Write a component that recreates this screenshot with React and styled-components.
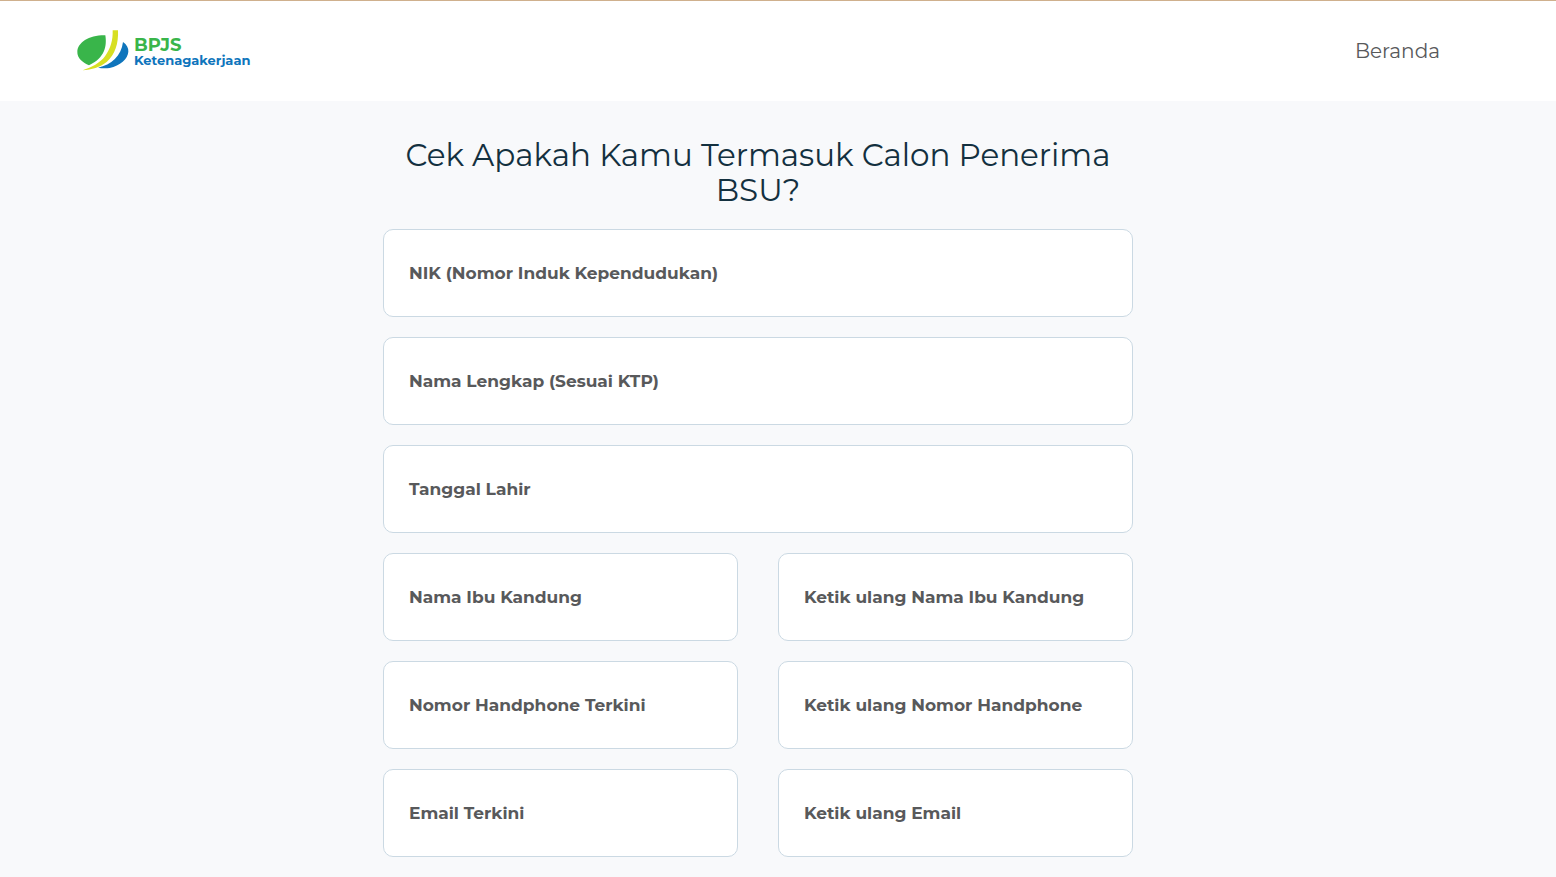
import React from "react";
import styled, { createGlobalStyle } from "styled-components";

const GlobalStyle = createGlobalStyle`
  * {
    box-sizing: border-box;
  }

  body {
    margin: 0;
    background: #f8f9fb;
    font-family: Montserrat, Inter, "Liberation Sans", sans-serif;
    color: #58595b;
  }
`;

const Header = styled.header`
  display: flex;
  align-items: center;
  justify-content: space-between;
  height: 101px;
  padding: 0 77px 1px;
  border-top: 1px solid #cfb08d;
  background: #fff;
`;

const LogoLink = styled.a`
  display: flex;
  align-items: center;
  gap: 5px;
  text-decoration: none;
`;

const LogoName = styled.span`
  display: flex;
  flex-direction: column;
  padding-top: 2px;
  font-size: 13px;
  font-weight: 700;
  line-height: 14px;
  color: #0f75bc;
`;

const LogoTop = styled.span`
  font-size: 18px;
  font-weight: 700;
  line-height: 16px;
  color: #39b54a;
`;

const NavLink = styled.a`
  padding: 10px 39px;
  font-size: 20px;
  font-weight: 400;
  line-height: 24px;
  color: #58595b;
  text-decoration: none;
`;

const Main = styled.main`
  max-width: 790px;
  margin: 0 auto;
  padding: 37px 40px 20px 0;
`;

const Title = styled.h1`
  margin: 0 0 21px;
  font-size: 31px;
  font-weight: 400;
  line-height: 35px;
  text-align: center;
  color: #13303f;
`;

const Form = styled.form`
  display: grid;
  grid-template-columns: 1fr 1fr;
  gap: 20px 40px;
`;

const FieldStyled = styled.div`
  position: relative;
  grid-column: ${({ $wide }) => ($wide ? "1 / -1" : "auto")};
`;

const Label = styled.label`
  position: absolute;
  top: 32px;
  left: 26px;
  font-size: 17px;
  font-weight: 700;
  line-height: 24px;
  white-space: nowrap;
  pointer-events: none;
`;

const Input = styled.input`
  display: block;
  width: 100%;
  height: 88px;
  padding: 24px 25px 0;
  border: 1px solid #cbd9e3;
  border-radius: 10px;
  background: #fff;
  font: inherit;
  font-size: 17px;
  color: inherit;
  outline: none;

  &:focus {
    border-color: #0f75bc;
  }

  &:focus + ${Label}, &:not(:placeholder-shown) + ${Label} {
    top: 10px;
    font-size: 13px;
  }
`;

const fields = [
  { name: "nik", label: "NIK (Nomor Induk Kependudukan)", wide: true },
  { name: "nama", label: "Nama Lengkap (Sesuai KTP)", wide: true },
  { name: "lahir", label: "Tanggal Lahir", wide: true },
  { name: "ibu", label: "Nama Ibu Kandung" },
  { name: "ibuUlang", label: "Ketik ulang Nama Ibu Kandung" },
  { name: "hp", label: "Nomor Handphone Terkini" },
  { name: "hpUlang", label: "Ketik ulang Nomor Handphone" },
  { name: "email", label: "Email Terkini" },
  { name: "emailUlang", label: "Ketik ulang Email" },
];

const LogoMark = () => (
  <svg width="52" height="41" viewBox="50 44 156 123" aria-hidden="true">
    <path
      fill="#39b54a"
      d="M86 150C68 142 50 128 51 109C52 82 86 59 135 60C140 92 134 128 86 150Z"
    />
    <path
      fill="#d7df23"
      d="M157 45H173C175 84 164 119 139 140C119 156 94 163 67 165C94 156 119 143 134 123C151 100 158 75 157 45Z"
    />
    <path
      fill="#0f75bc"
      d="M188 80C199 88 205 98 204 109C203 130 179 151 148 158C136 160 123 159 113 157C153 149 183 122 188 80Z"
    />
  </svg>
);

const Field = ({ name, label, wide }) => (
  <FieldStyled $wide={wide}>
    <Input id={name} name={name} type="text" placeholder=" " />
    <Label htmlFor={name}>{label}</Label>
  </FieldStyled>
);

const App = () => {
  return (
    <>
      <GlobalStyle />
      <Header>
        <LogoLink href="#">
          <LogoMark />
          <LogoName>
            <LogoTop>BPJS</LogoTop>
            Ketenagakerjaan
          </LogoName>
        </LogoLink>
        <NavLink href="#">Beranda</NavLink>
      </Header>
      <Main>
        <Title>Cek Apakah Kamu Termasuk Calon Penerima BSU?</Title>
        <Form>
          {fields.map((field) => (
            <Field key={field.name} {...field} />
          ))}
        </Form>
      </Main>
    </>
  );
};

export default App;
